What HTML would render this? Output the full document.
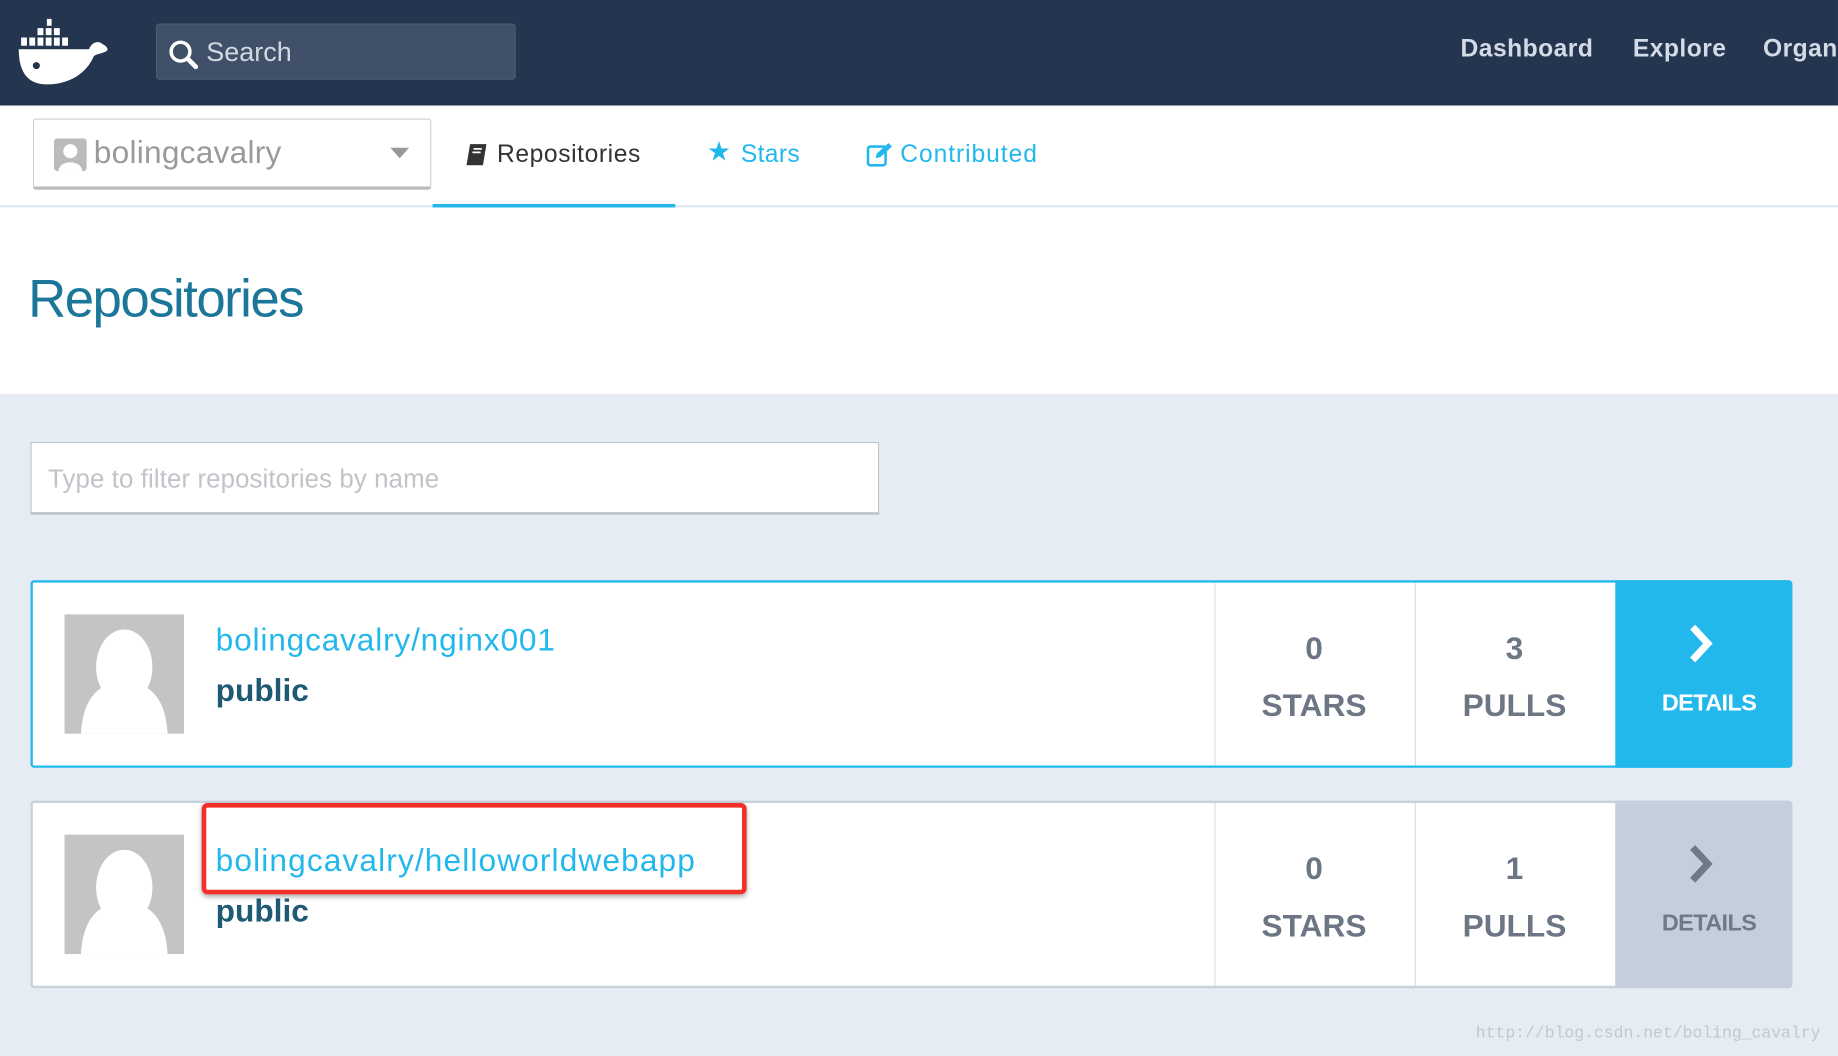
<!DOCTYPE html>
<html><head><meta charset="utf-8"><style>
*{box-sizing:border-box;margin:0;padding:0}
html,body{width:1838px;height:1056px;overflow:hidden;background:#e6ecf4}
#w{position:absolute;left:0;top:0;width:1568px;height:901px;overflow:hidden;transform:scale(1.17219);transform-origin:0 0;font-family:"Liberation Sans",Arial,sans-serif}
.a{position:absolute}
.hdr{left:0;top:0;width:1568px;height:90px;background:#24354f}
.srch{left:133px;top:20px;width:307px;height:48px;background:#3f5068;border-radius:3px;border:1px solid #4a5b72}
.nav{top:30px;font-size:21px;font-weight:bold;color:#d3dbe6;letter-spacing:.4px;white-space:nowrap}
.sub{left:0;top:90px;width:1568px;height:246px;background:#fff}
.card{left:26px;width:1503px;height:160px;background:#fff;border-radius:3px}
.num{width:170px;text-align:center;font-weight:bold;color:#6c7684}
</style></head><body><div id="w">
<div class="a hdr"></div>
<svg class="a" style="left:14px;top:16px" width="80" height="58" viewBox="0 0 80 58">
<g fill="#fff"><rect x="26" y="0" width="4" height="6"/><rect x="18" y="8" width="5" height="6"/><rect x="25" y="8" width="5" height="6"/><rect x="32" y="8" width="5" height="6"/>
<rect x="4" y="16" width="5" height="7"/><rect x="11" y="16" width="5" height="7"/><rect x="18" y="16" width="5" height="7"/><rect x="25" y="16" width="5" height="7"/><rect x="32" y="16" width="5" height="7"/><rect x="39" y="16" width="5" height="7"/>
<path d="M2 26 H62 C64 20 70 18 74 22 C78 24 79 27 76 28 C72 30 68 30 66 32 C60 46 46 56 26 56 C10 56 2 46 2 26Z"/></g>
<circle cx="17" cy="40" r="3" fill="#24354f"/></svg>
<div class="a srch"></div>
<svg class="a" style="left:144px;top:34px" width="26" height="26" viewBox="0 0 26 26"><circle cx="10" cy="10" r="8" fill="none" stroke="#fff" stroke-width="3"/><path d="M16 16 L23 23" stroke="#fff" stroke-width="4" stroke-linecap="round"/></svg>
<div class="a" style="left:176px;top:31px;font-size:23px;color:#d3d9e2">Search</div>
<div class="a nav" style="left:1246px">Dashboard</div>
<div class="a nav" style="left:1393px">Explore</div>
<div class="a nav" style="left:1504px;width:64px;overflow:hidden">Organizations</div>
<div class="a sub"></div>
<div class="a" style="left:0;top:175px;width:1568px;height:2px;background:#e1e8ef"></div>
<div class="a" style="left:369px;top:174px;width:207px;height:3px;background:#22b8eb"></div>
<div class="a" style="left:28px;top:101px;width:340px;height:61px;border:1px solid #ccc;border-bottom:3px solid #bbb;border-radius:3px;background:#fff"></div>
<svg class="a" style="left:46px;top:118px" width="28" height="28" viewBox="0 0 28 28"><rect width="28" height="28" rx="3" fill="#bbb"/><circle cx="14" cy="11" r="6" fill="#fff"/><path d="M4 28 C4 18 24 18 24 28Z" fill="#fff"/></svg>
<div class="a" style="left:80px;top:115px;font-size:27px;color:#9a9a9a;letter-spacing:.2px">bolingcavalry</div>
<div class="a" style="left:333px;top:126px;border-left:8px solid transparent;border-right:8px solid transparent;border-top:9px solid #999"></div>
<svg class="a" style="left:397px;top:122px" width="20" height="20" viewBox="0 0 20 20"><path d="M4 1 H18 L15 19 H1Z" fill="#333"/><path d="M7 5 H14 M6 8 H13" stroke="#fff" stroke-width="1.5"/></svg>
<div class="a" style="left:424px;top:120px;font-size:21px;color:#333;letter-spacing:.5px">Repositories</div>
<div class="a" style="left:603px;top:116px;font-size:23px;color:#22b8eb">★</div>
<div class="a" style="left:632px;top:120px;font-size:21px;color:#22b8eb;letter-spacing:.3px">Stars</div>
<svg class="a" style="left:739px;top:121px" width="24" height="22" viewBox="0 0 24 22"><rect x="1.5" y="4" width="15" height="16" rx="2" fill="none" stroke="#22b8eb" stroke-width="2.2"/><path d="M8 14 L9 10 L19 1 L22 4 L12 13Z" fill="#22b8eb"/></svg>
<div class="a" style="left:768px;top:120px;font-size:21px;color:#22b8eb;letter-spacing:.8px">Contributed</div>
<div class="a" style="left:24px;top:229px;font-size:45px;color:#1b7699;letter-spacing:-1.3px">Repositories</div>
<div class="a" style="left:26px;top:377px;width:724px;height:62px;background:#fff;border:1px solid #c1c6cc;border-bottom:2px solid #b8bec6"></div>
<div class="a" style="left:41px;top:396px;font-size:22px;color:#c0c4c8;letter-spacing:.1px">Type to filter repositories by name</div>

<div class="a card" style="top:495px;border:2px solid #22b8eb"></div>
<div class="a" style="left:1378px;top:495px;width:151px;height:160px;background:#22b8eb;border-radius:0 3px 3px 0"></div>
<div class="a card" style="top:683px;border:2px solid #c8d0da"></div>
<div class="a" style="left:1378px;top:683px;width:151px;height:160px;background:#c5cfdc;border-radius:0 3px 3px 0"></div>

<div class="a" style="left:1036px;top:497px;width:1px;height:156px;background:#d8dfe6"></div>
<div class="a" style="left:1207px;top:497px;width:1px;height:156px;background:#d8dfe6"></div>
<div class="a" style="left:1036px;top:685px;width:1px;height:156px;background:#d8dfe6"></div>
<div class="a" style="left:1207px;top:685px;width:1px;height:156px;background:#d8dfe6"></div>

<svg class="a" style="left:55px;top:524px" width="102" height="102" viewBox="0 0 102 102"><rect width="102" height="102" fill="#c4c4c4"/><ellipse cx="51" cy="45" rx="24" ry="32" fill="#fff"/><path d="M14 102 C16 70 30 58 51 58 C72 58 86 70 88 102Z" fill="#fff"/></svg>
<svg class="a" style="left:55px;top:712px" width="102" height="102" viewBox="0 0 102 102"><rect width="102" height="102" fill="#c4c4c4"/><ellipse cx="51" cy="45" rx="24" ry="32" fill="#fff"/><path d="M14 102 C16 70 30 58 51 58 C72 58 86 70 88 102Z" fill="#fff"/></svg>

<div class="a" style="left:184px;top:531px;font-size:27px;color:#22b8eb;letter-spacing:.7px">bolingcavalry/nginx001</div>
<div class="a" style="left:184px;top:574px;font-size:27px;font-weight:bold;color:#1e5a74">public</div>
<div class="a" style="left:184px;top:719px;font-size:27px;color:#22b8eb;letter-spacing:.95px">bolingcavalry/helloworldwebapp</div>
<div class="a" style="left:184px;top:762px;font-size:27px;font-weight:bold;color:#1e5a74">public</div>
<div class="a" style="left:172px;top:685px;width:465px;height:78px;border:4px solid #f2302a;border-radius:5px;box-shadow:0 2px 4px rgba(0,0,0,.3)"></div>

<div class="a num" style="left:1036px;top:538px;font-size:27px">0</div>
<div class="a num" style="left:1036px;top:587px;font-size:27px">STARS</div>
<div class="a num" style="left:1207px;top:538px;font-size:27px">3</div>
<div class="a num" style="left:1207px;top:587px;font-size:27px">PULLS</div>
<div class="a num" style="left:1036px;top:726px;font-size:27px">0</div>
<div class="a num" style="left:1036px;top:775px;font-size:27px">STARS</div>
<div class="a num" style="left:1207px;top:726px;font-size:27px">1</div>
<div class="a num" style="left:1207px;top:775px;font-size:27px">PULLS</div>

<svg class="a" style="left:1438px;top:532px" width="26" height="34" viewBox="0 0 26 34"><path d="M6 3 L19 17 L6 31" fill="none" stroke="#fff" stroke-width="6"/></svg>
<div class="a" style="left:1378px;top:589px;width:160px;text-align:center;font-size:20px;font-weight:bold;color:#fff;letter-spacing:-.5px">DETAILS</div>
<svg class="a" style="left:1438px;top:720px" width="26" height="34" viewBox="0 0 26 34"><path d="M6 3 L19 17 L6 31" fill="none" stroke="#6e7a8a" stroke-width="6"/></svg>
<div class="a" style="left:1378px;top:777px;width:160px;text-align:center;font-size:20px;font-weight:bold;color:#6e7a8a;letter-spacing:-.5px">DETAILS</div>

<div class="a" style="left:1259px;top:874px;font-size:14px;font-family:'Liberation Mono',monospace;color:#c4c8cc;white-space:nowrap">http://blog.csdn.net/boling_cavalry</div>
</div></body></html>
